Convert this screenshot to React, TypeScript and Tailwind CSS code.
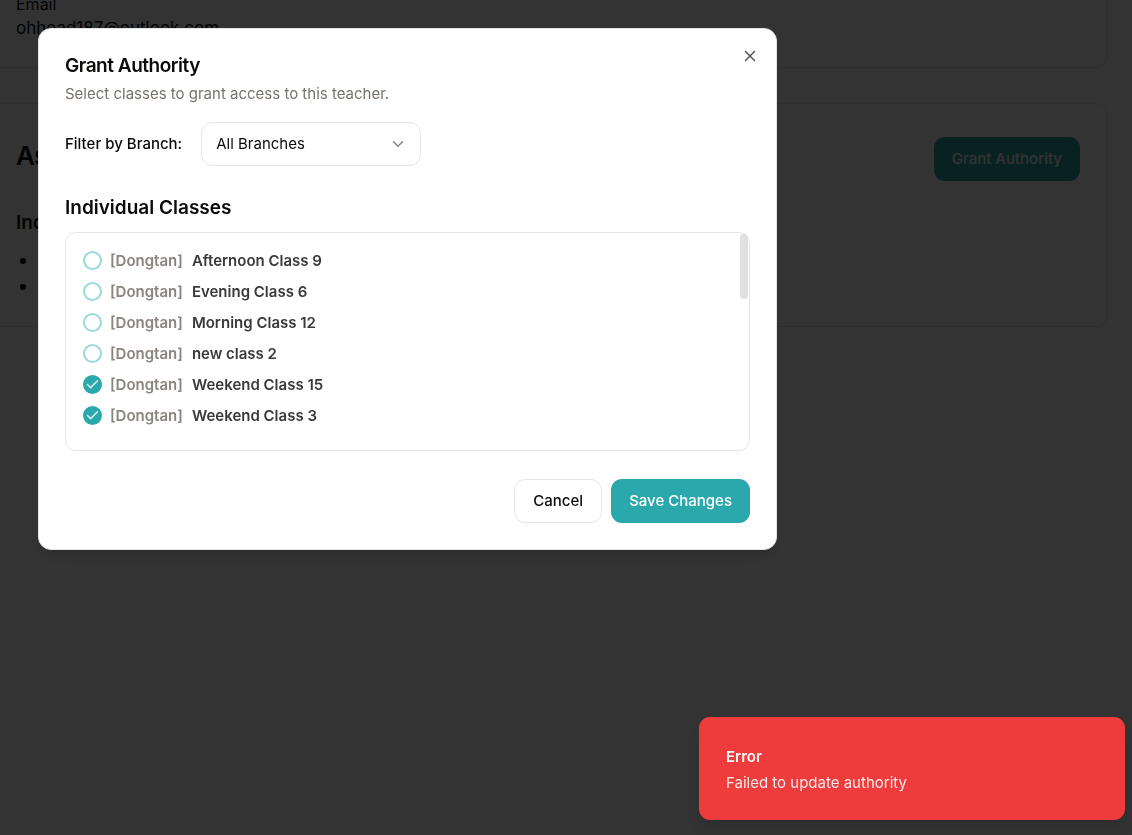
import { Check, ChevronDown, X } from "lucide-react";

type ClassItem = { id: string; branch: string; name: string; granted: boolean };

const classes: ClassItem[] = [
  { id: "afternoon-9", branch: "Dongtan", name: "Afternoon Class 9", granted: false },
  { id: "evening-6", branch: "Dongtan", name: "Evening Class 6", granted: false },
  { id: "morning-12", branch: "Dongtan", name: "Morning Class 12", granted: false },
  { id: "new-2", branch: "Dongtan", name: "new class 2", granted: false },
  { id: "weekend-15", branch: "Dongtan", name: "Weekend Class 15", granted: true },
  { id: "weekend-3", branch: "Dongtan", name: "Weekend Class 3", granted: true },
];

function TeacherPage() {
  return (
    <main className="-mt-[9px] pr-6">
      <section className="rounded-r-xl border-y border-r border-[#e5e5e5] border-t-transparent pb-[27px] pl-4">
        <dl>
          <dt className="text-base leading-6">Email</dt>
          <dd className="text-[17px] leading-6">ohhead187@outlook.com</dd>
        </dl>
      </section>
      <section className="mt-[35px] rounded-r-xl border-y border-r border-[#e5e5e5] pt-[33px] pr-[27px] pb-[26px] pl-4">
        <div className="flex items-start justify-between">
          <h1 className="text-[26px] leading-[38px] font-semibold tracking-tight">Assigned Classes</h1>
          <button
            type="button"
            className="h-11 rounded-[11px] bg-[#2ba8ac] px-[18px] text-[15px] font-medium text-white"
          >
            Grant Authority
          </button>
        </div>
        <h2 className="mt-7 text-[19px] leading-7 font-semibold">Individual Classes</h2>
        <ul className="mt-[11px] text-base leading-[26px]">
          {classes
            .filter((c) => c.granted)
            .map((c) => (
              <li key={c.id} className="flex items-center gap-4 pl-1">
                <span className="size-1.5 rounded-full bg-black" />
                {c.name}
              </li>
            ))}
        </ul>
      </section>
    </main>
  );
}

function ClassRow({ item }: { item: ClassItem }) {
  return (
    <li className="flex h-[31px] items-center">
      <span className="grid size-[19px] place-items-center">
        <input
          id={item.id}
          type="checkbox"
          defaultChecked={item.granted}
          className="peer col-start-1 row-start-1 size-[19px] appearance-none rounded-full border-2 border-[#9bdadb] checked:border-[#2ba8ac] checked:bg-[#2ba8ac]"
        />
        <Check
          className="pointer-events-none col-start-1 row-start-1 hidden size-[15px] text-[#d5eeee] peer-checked:block"
          strokeWidth={2.4}
        />
      </span>
      <label htmlFor={item.id} className="flex gap-[9px] pl-2 text-[15px] leading-5 font-semibold">
        <span className="text-[#8c8480]">{`[${item.branch}]`}</span>
        <span className="text-[#3a3a3a]">{item.name}</span>
      </label>
    </li>
  );
}

function GrantDialog() {
  return (
    <div
      role="dialog"
      aria-labelledby="dialog-title"
      className="relative w-full max-w-[739px] rounded-[13px] border border-[#e5e5e5] bg-white p-[26px] shadow-lg"
    >
      <button type="button" aria-label="Close" className="absolute top-[18px] right-[17px] text-[#555555]">
        <X className="size-[18px]" strokeWidth={2} />
      </button>
      <h2 id="dialog-title" className="text-[19px] leading-[22px] font-semibold tracking-tight">
        Grant Authority
      </h2>
      <p className="mt-[6px] text-[15px] leading-[22px] text-[#78716c]">
        Select classes to grant access to this teacher.
      </p>
      <div className="mt-[17px] flex items-center gap-[19px] text-[15px]">
        <label htmlFor="branch" className="font-medium">
          Filter by Branch:
        </label>
        <div className="relative">
          <select
            id="branch"
            className="h-11 w-[220px] appearance-none rounded-[11px] border border-[#e7e5e4] bg-white px-3.5"
          >
            <option>All Branches</option>
          </select>
          <ChevronDown
            className="pointer-events-none absolute top-[13px] right-3.5 size-[18px] text-[#858585]"
            strokeWidth={2}
          />
        </div>
      </div>
      <h3 className="mt-7 text-[19px] leading-7 font-semibold">Individual Classes</h3>
      <div className="relative mt-[10px] h-[219px] rounded-[11px] border border-[#e7e5e4] px-[17px] py-3">
        <ul>
          {classes.map((c) => (
            <ClassRow key={c.id} item={c} />
          ))}
        </ul>
        <span className="absolute top-px right-px h-[65px] w-2 rounded-full bg-[#e0e0df]" />
      </div>
      <div className="mt-7 flex justify-end gap-[9px] text-[15px] font-medium">
        <button type="button" className="h-11 rounded-[11px] border border-[#e7e5e4] px-[18px]">
          Cancel
        </button>
        <button type="button" className="h-11 rounded-[11px] bg-[#2ba8ac] px-[18px] text-white">
          Save Changes
        </button>
      </div>
    </div>
  );
}

export default function App() {
  return (
    <div className="flow-root min-h-screen overflow-hidden bg-white font-['Inter',sans-serif] text-[#0c0a09]">
      <TeacherPage />
      <div className="fixed inset-0 bg-black/80 pt-7 pl-[38px]">
        <GrantDialog />
      </div>
      <div
        role="alert"
        className="fixed right-[7px] bottom-[15px] w-full max-w-[426px] rounded-[11px] bg-[#ee3c3c] px-[27px] pt-[27px] pb-6 text-[15px] leading-[26px] text-[#fafafa] shadow-lg"
      >
        <p className="font-semibold">Error</p>
        <p className="opacity-90">Failed to update authority</p>
      </div>
    </div>
  );
}
